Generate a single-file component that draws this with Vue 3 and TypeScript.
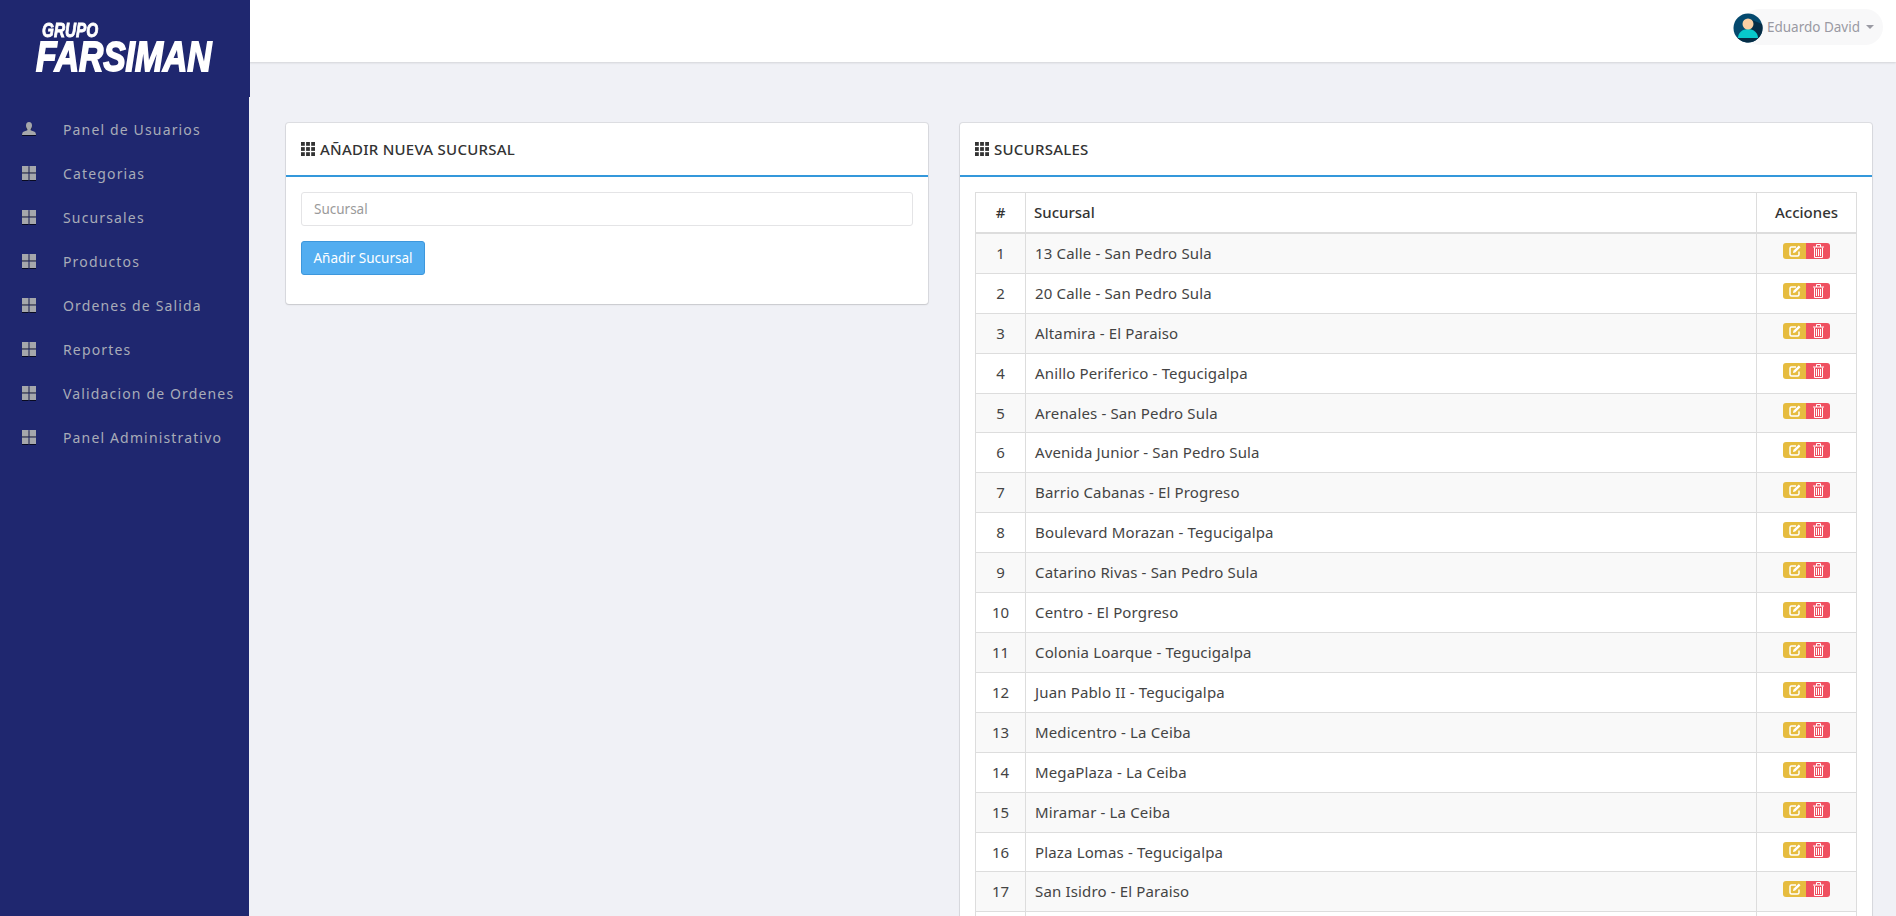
<template>
  <div class="page">
    <aside class="sidebar">
      <div class="brand">
        <div class="logo">
          <span class="logo-small">GRUPO</span>
          <span class="logo-big">FARSIMAN</span>
        </div>
      </div>
      <ul class="menu">
        <li v-for="item in menu" :key="item.label">
          <svg v-if="item.icon === 'user'" class="menu-icon" viewBox="0 0 14 14">
            <path d="M7 0c2 0 3 1.400 3 3.400 0 1.400-.5 2.800-1.300 3.600v1.300c1.300.6 4 1.200 4.700 2.200.4.700.6 1.500.6 2.500H0c0-1 .2-1.800.6-2.500.7-1 3.400-1.600 4.700-2.200V7C4.500 6.200 4 4.800 4 3.400 4 1.400 5 0 7 0z" />
          </svg>
          <svg v-else class="menu-icon" viewBox="0 0 14 14">
            <rect x="0" y="0" width="6.500" height="6.500" />
            <rect x="7.500" y="0" width="6.500" height="6.500" />
            <rect x="0" y="7.500" width="6.500" height="6.500" />
            <rect x="7.500" y="7.500" width="6.500" height="6.500" />
          </svg>
          <span>{{ item.label }}</span>
        </li>
      </ul>
    </aside>

    <div class="main">
      <header class="topbar">
        <div class="user">
          <svg class="avatar" viewBox="0 0 30 30">
            <circle cx="15" cy="15" r="14.500" fill="#04496e" />
            <path d="M19 7L29 11A14.500 14.500 0 0 1 5 25.500z" fill="#062c45" />
            <path d="M5 25c0-5 4-9 10-9s10 4 10 9z" fill="#08c8cc" />
            <circle cx="15" cy="11" r="5.500" fill="#fbcfa4" />
          </svg>
          <span class="user-name">Eduardo David</span>
          <span class="caret"></span>
        </div>
      </header>

      <div class="content">
        <section class="card card-form">
          <div class="card-head">
            <svg class="th-icon" viewBox="0 0 14 14">
              <rect v-for="c in gridCells" :key="c.id" :x="c.x" :y="c.y" width="3.800" height="3.800" />
            </svg>
            <span>AÑADIR NUEVA SUCURSAL</span>
          </div>
          <div class="card-body form-body">
            <input class="field" type="text" placeholder="Sucursal" />
            <button class="btn-add" type="button">Añadir Sucursal</button>
          </div>
        </section>

        <section class="card card-table">
          <div class="card-head">
            <svg class="th-icon" viewBox="0 0 14 14">
              <rect v-for="c in gridCells" :key="c.id" :x="c.x" :y="c.y" width="3.800" height="3.800" />
            </svg>
            <span>SUCURSALES</span>
          </div>
          <div class="card-body">
            <table class="grid">
              <thead>
                <tr>
                  <th class="col-num">#</th>
                  <th class="col-name">Sucursal</th>
                  <th class="col-act">Acciones</th>
                </tr>
              </thead>
              <tbody>
                <tr v-for="(name, i) in branches" :key="i">
                  <td class="col-num">{{ name ? i + 1 : '' }}</td>
                  <td class="col-name">{{ name }}</td>
                  <td class="col-act">
                    <span class="actions">
                      <span class="act act-edit">
                        <svg viewBox="0 0 12 12" width="12" height="12" fill="none" stroke="#fff">
                          <path d="M10 6.500V9.500a1.500 1.500 0 0 1-1.500 1.500H2.500A1.500 1.500 0 0 1 1 9.500V3.500A1.500 1.500 0 0 1 2.500 2H7" stroke-width="1.500" />
                          <path d="M4 8l.4-2.200L9.800.5 11.500 2.200 6.200 7.600z" fill="#fff" stroke="none" />
                        </svg>
                      </span>
                      <span class="act act-del">
                        <svg viewBox="0 0 11 14" width="11" height="14" fill="none" stroke="#fff">
                          <path d="M0 3h11M3.500 3V.5h4V3" stroke-width="1" />
                          <path d="M1.500 3.500v10h8v-10M3.500 5v7M5.500 5v7M7.500 5v7" stroke-width="1" />
                        </svg>
                      </span>
                    </span>
                  </td>
                </tr>
              </tbody>
            </table>
          </div>
        </section>
      </div>
    </div>
  </div>
</template>

<script setup lang="ts">
const menu = [
  { label: 'Panel de Usuarios', icon: 'user' },
  { label: 'Categorias', icon: 'grid' },
  { label: 'Sucursales', icon: 'grid' },
  { label: 'Productos', icon: 'grid' },
  { label: 'Ordenes de Salida', icon: 'grid' },
  { label: 'Reportes', icon: 'grid' },
  { label: 'Validacion de Ordenes', icon: 'grid' },
  { label: 'Panel Administrativo', icon: 'grid' },
]

const branches = [
  '13 Calle - San Pedro Sula',
  '20 Calle - San Pedro Sula',
  'Altamira - El Paraiso',
  'Anillo Periferico - Tegucigalpa',
  'Arenales - San Pedro Sula',
  'Avenida Junior - San Pedro Sula',
  'Barrio Cabanas - El Progreso',
  'Boulevard Morazan - Tegucigalpa',
  'Catarino Rivas - San Pedro Sula',
  'Centro - El Porgreso',
  'Colonia Loarque - Tegucigalpa',
  'Juan Pablo II - Tegucigalpa',
  'Medicentro - La Ceiba',
  'MegaPlaza - La Ceiba',
  'Miramar - La Ceiba',
  'Plaza Lomas - Tegucigalpa',
  'San Isidro - El Paraiso',
  '',
]

const gridCells = [0, 1, 2, 3, 4, 5, 6, 7, 8].map((id) => ({
  id,
  x: (id % 3) * 5.1,
  y: Math.floor(id / 3) * 5.1,
}))
</script>

<style>
html,
body {
  margin: 0;
  height: 100%;
  overflow: hidden;
}
</style>

<style scoped>
.page {
  display: flex;
  height: 916px;
  overflow: hidden;
  background: #f0f1f6;
  font-family: "Noto Sans", "Open Sans", sans-serif;
  font-size: 15px;
  color: #444;
}

.sidebar {
  width: 249px;
  flex: none;
  background: #1f276f;
  position: relative;
  z-index: 2;
}

.brand {
  width: 250px;
  height: 97px;
  background: #1f276f;
  padding: 21px 0 0 36px;
  box-sizing: border-box;
}

.logo {
  display: flex;
  flex-direction: column;
  color: #fff;
  font-family: "Liberation Sans", sans-serif;
  font-weight: 700;
  font-style: italic;
}

.logo-small {
  font-size: 21px;
  line-height: 18px;
  margin-left: 6px;
  -webkit-text-stroke: 0.9px #fff;
  transform: scaleX(0.73);
  transform-origin: left;
}

.logo-big {
  font-size: 42px;
  line-height: 36px;
  -webkit-text-stroke: 1.8px #fff;
  transform: scaleX(0.8);
  transform-origin: left;
  white-space: nowrap;
}

.menu {
  list-style: none;
  margin: 0;
  padding: 10px 0 0;
}

.menu li {
  display: flex;
  align-items: center;
  height: 44px;
  padding-left: 22px;
  color: #a8acb8;
  font-size: 14px;
  letter-spacing: 1.150px;
  white-space: nowrap;
}

.menu-icon {
  width: 14px;
  height: 14px;
  fill: #a5a7ab;
  filter: drop-shadow(0 1px 0 rgba(0, 0, 0, 0.7));
  margin-right: 27px;
  flex: none;
}

.main {
  flex: 1;
  min-width: 0;
  display: flex;
  flex-direction: column;
}

.topbar {
  height: 62px;
  flex: none;
  background: #fff;
  box-shadow: 0 1px 2px rgba(0, 0, 0, 0.12);
  display: flex;
  align-items: flex-start;
  justify-content: flex-end;
  padding: 9px 13px 0 0;
  box-sizing: border-box;
}

.user {
  display: flex;
  align-items: center;
  height: 36px;
  background: #f8f8f9;
  border-radius: 18px;
  padding-right: 9px;
}

.avatar {
  width: 30px;
  height: 30px;
  margin: 2px 4px 0 -9px;
}

.user-name {
  color: #9a9aa3;
  font-size: 13.500px;
}

.caret {
  width: 0;
  height: 0;
  margin-left: 6px;
  border-left: 4px solid transparent;
  border-right: 4px solid transparent;
  border-top: 4px solid #9a9aa3;
}

.content {
  flex: 1;
  display: flex;
  align-items: flex-start;
  gap: 32px;
  padding: 61px 24px 0 37px;
  min-height: 0;
}

.card {
  background: #fff;
  border-radius: 3px;
  box-shadow: 0 0 0 1px rgba(0, 0, 0, 0.08), 0 1px 2px rgba(0, 0, 0, 0.1);
  flex: none;
}

.card-form {
  width: 642px;
}

.card-table {
  width: 912px;
}

.card-head {
  display: flex;
  align-items: center;
  gap: 5px;
  height: 52px;
  padding: 0 15px;
  border-bottom: 2px solid #3498db;
  font-size: 15px;
  font-weight: 500;
  letter-spacing: 0.25px;
  color: #333;
}

.th-icon {
  width: 14px;
  height: 14px;
  fill: #333;
  flex: none;
}

.card-body {
  padding: 15px;
}

.form-body {
  padding-bottom: 29px;
}

.field {
  display: block;
  width: 100%;
  box-sizing: border-box;
  height: 34px;
  padding: 0 12px;
  border: 1px solid #e4e4e6;
  border-radius: 3px;
  font: inherit;
  font-size: 13.500px;
  margin-bottom: 15px;
}

.field::placeholder {
  color: #9a9a9a;
}

.btn-add {
  display: block;
  height: 34px;
  width: 124px;
  padding: 0;
  background: #52adf0;
  border: 1px solid #3d97dc;
  border-radius: 3px;
  color: #fff;
  font: inherit;
  font-size: 13.500px;
}

.grid {
  width: 100%;
  border-collapse: collapse;
  table-layout: fixed;
}

.grid th,
.grid td {
  border: 1px solid #ddd;
  padding: 9px 8px;
  line-height: 20.900px;
  text-align: left;
  box-sizing: border-box;
}

.grid thead th {
  border-bottom-width: 2px;
  font-weight: 500;
  color: #333;
  padding-top: 9px;
}

.grid tbody .col-name {
  padding-left: 9px;
  letter-spacing: 0.15px;
}

.grid tbody tr:nth-child(odd) {
  background: #f9f9f9;
}

.grid .col-num {
  width: 50px;
  text-align: center;
}

.grid .col-act {
  width: 100px;
  text-align: center;
  padding-top: 0;
  vertical-align: top;
}

.grid thead .col-act {
  padding-top: 9px;
}

.actions {
  display: inline-flex;
  margin-top: 9px;
  vertical-align: top;
}

.act {
  height: 16px;
  display: flex;
  align-items: center;
  justify-content: center;
}

.act-edit {
  width: 23px;
  background: #e6bc3f;
  border-radius: 3px 0 0 3px;
}

.act-del {
  width: 24px;
  background: #ef5060;
  border-radius: 0 3px 3px 0;
}
</style>
